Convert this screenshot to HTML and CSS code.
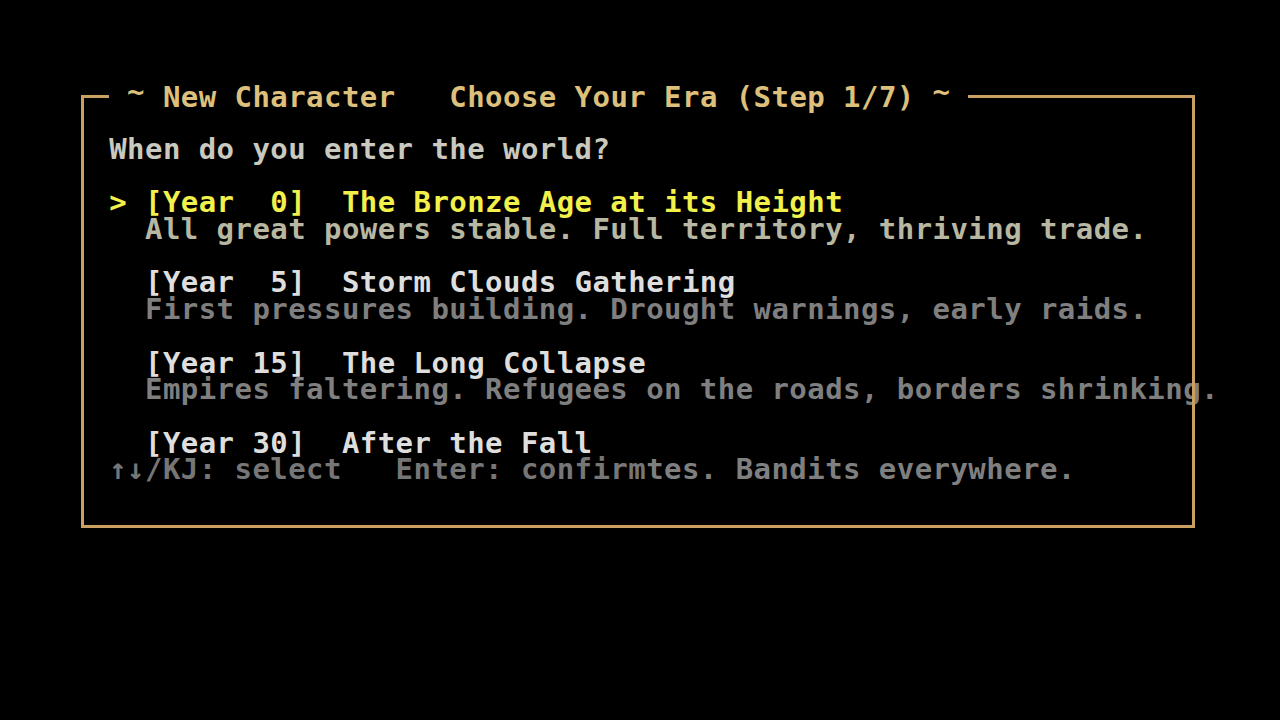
FILE: index.html
```html
<!DOCTYPE html>
<html lang="en">
<head>
<meta charset="utf-8">
<title>New Character - Choose Your Era</title>
<link rel="stylesheet" href="styles.css">
</head>
<body>
<main class="screen">
  <section class="box">
    <div class="title"> <span class="tilde">~</span> New Character   Choose Your Era (Step 1/7) <span class="tilde">~</span> </div>
    <div class="row prompt">When do you enter the world?</div>
    <div class="options">
      <div class="option selected">
        <div class="row head">&gt; [Year  0]  The Bronze Age at its Height</div>
        <div class="row desc">  All great powers stable. Full territory, thriving trade.</div>
      </div>
      <div class="option">
        <div class="row head">  [Year  5]  Storm Clouds Gathering</div>
        <div class="row desc">  First pressures building. Drought warnings, early raids.</div>
      </div>
      <div class="option">
        <div class="row head">  [Year 15]  The Long Collapse</div>
        <div class="row desc">  Empires faltering. Refugees on the roads, borders shrinking.</div>
      </div>
      <div class="option">
        <div class="row head">  [Year 30]  After the Fall</div>
        <div class="row footer"><span class="keys">↑↓/KJ: select   Enter: confirm</span><span class="desc-tail">tes. Bandits everywhere.</span></div>
      </div>
    </div>
  </section>
</main>
</body>
</html>
```

FILE: styles.css
```css
html, body {
  margin: 0;
  padding: 0;
  background: #000;
}

body {
  width: 1280px;
  height: 720px;
  overflow: hidden;
  font-family: "DejaVu Sans Mono", "Liberation Mono", monospace;
  font-weight: bold;
  font-size: 29px;
  letter-spacing: 0.44px;
  line-height: 26.7px;
}

.screen {
  padding-top: 95px;
  padding-left: 81px;
}

.box {
  position: relative;
  box-sizing: border-box;
  width: 1114px;
  height: 433px;
  padding: 41px 0 0 28.2px;
}

.box::after {
  content: "";
  position: absolute;
  inset: 0;
  border: 3px solid #c9a062;
  pointer-events: none;
  z-index: 1;
}

.title {
  position: absolute;
  top: -11.5px;
  left: 28.2px;
  z-index: 2;
  white-space: pre;
  background: #000;
  color: #dcc07c;
  height: 26.7px;
}

.tilde {
  line-height: 0;
  vertical-align: 6px;
}

.row {
  white-space: pre;
  height: 26.7px;
}

.prompt {
  color: #c9c9bf;
}

.options {
  display: flex;
  flex-direction: column;
  gap: 26.7px;
  margin-top: 26.7px;
}

.head {
  color: #dedede;
}

.desc {
  color: #7f7f7f;
}

.selected .head {
  color: #f2f04a;
}

.selected .desc {
  color: #b7b7a2;
}

.keys {
  color: #767676;
}

.desc-tail {
  color: #7f7f7f;
}
```
